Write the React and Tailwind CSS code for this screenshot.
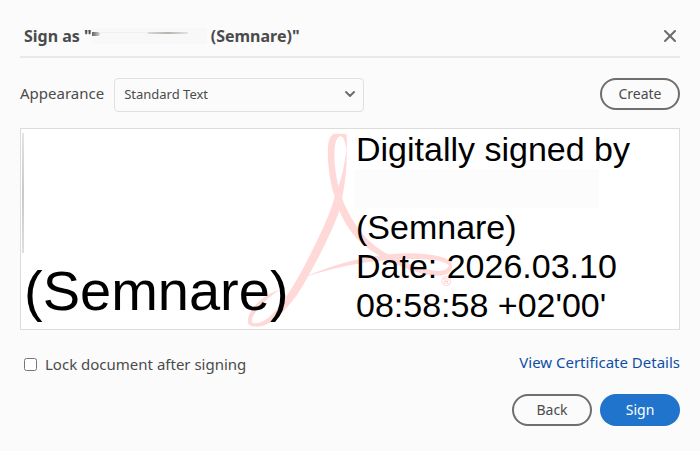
import { ChevronDown, X } from "lucide-react";

function PdfMark() {
  return (
    <svg
      viewBox="55 40 615 582"
      className="absolute inset-y-1 left-1/2 h-[194px] w-[205px] -translate-x-1/2"
      fill="#ffd8d8"
      aria-hidden="true"
    >
      <path d="M353 84V46L347 42H318C302 44 296 66 296 96C296 140 303 190 317 232C343 325 390 376 462 414C530 450 585 468 630 468C655 468 668 455 670 437H660C656 448 645 455 626 454C590 452 545 436 490 410C424 380 380 330 344 250C322 190 314 140 316 92C318 66 324 50 334 50C343 50 347 62 350 84Z" />
      <path d="M353 80C346 140 336 185 317 232C296 300 266 360 238 415C200 490 160 555 120 592C105 605 88 612 75 611C62 608 68 590 85 570C98 553 120 530 152 510C115 520 85 545 68 570C56 590 53 605 58 614C64 621 80 622 95 620C130 612 167 575 204 525C244 462 304 350 330 275C346 210 354 150 353 80Z" />
      <path d="M222 475C300 438 420 401 540 401C602 401 667 411 670 438H660C650 424 610 418 550 418C430 418 310 442 222 475Z" />
      <text
        x="652"
        y="500"
        textAnchor="middle"
        fontSize="40"
        fill="#ffc8c8"
        className="font-['Liberation_Sans',sans-serif]"
      >
        ®
      </text>
    </svg>
  );
}

export default function App() {
  return (
    <main className="min-h-screen bg-[#fbfbfb] px-5 pt-4 pb-6 font-['Noto_Sans',sans-serif] text-[#4b4b4b]">
      <header className="flex h-[42px] items-center justify-between border-b-2 border-[#e9e9e9] pl-1">
        <h1 className="flex items-center text-base font-bold">
          Sign as "
          {/* Name is blanked out */}
          <span className="mr-1 flex h-4 w-[115px] items-start bg-[#f8f8f8] pt-1">
            <span className="h-1 w-2 rounded-r-full bg-gradient-to-r from-[#6b635c] to-[#d8d5d0]"></span>
            <span className="h-px w-12 bg-[#f0f0ee]"></span>
            <span className="h-0.5 w-10 bg-gradient-to-r from-[#d8d8d5] via-[#b5b5b0] to-[#e4e4e2]"></span>
          </span>
          (Semnare)"
        </h1>
        <button aria-label="Close" className="text-[#6e6e6e]">
          <X size={20} strokeWidth={2.5} />
        </button>
      </header>

      <div className="mt-5 flex items-start justify-between">
        <div className="flex items-start">
          <label htmlFor="appearance" className="mr-2.5 text-[15px] leading-[30px]">
            Appearance
          </label>
          <div className="relative">
            <select
              id="appearance"
              className="h-[34px] w-[250px] appearance-none rounded border border-[#e0e0e0] bg-[#fbfbfb] px-[9px] text-[13px]"
            >
              <option>Standard Text</option>
            </select>
            <ChevronDown
              size={16}
              strokeWidth={3}
              className="pointer-events-none absolute top-2 right-1.5 text-[#6e6e6e]"
            />
          </div>
        </div>
        <button className="h-8 w-20 rounded-full border-2 border-[#6e6e6e] text-sm">
          Create
        </button>
      </div>

      {/* Signature preview */}
      <section className="relative mt-4 grid grid-cols-2 border border-[#dcdcdc] bg-white font-['Liberation_Sans',sans-serif] text-black">
        <PdfMark />
        <div className="relative flex flex-col justify-between pt-1 pb-1.5 pl-px">
          <div className="h-[120px] w-0.5 bg-gradient-to-b from-[#e4e4e4] via-[#c8c8c8] to-[#dedede]"></div>
          <p className="pl-0.5 text-[56px] leading-[64px]">(Semnare)</p>
        </div>
        <div className="relative pt-px pb-1 pl-1 text-[34px] leading-[39px]">
          <p className="pl-0.5">Digitally signed by</p>
          <div className="h-[39px] w-[245px] bg-[#fcfcfc]"></div>
          <p className="pl-0.5">(Semnare)</p>
          <p className="pl-0.5">Date: 2026.03.10</p>
          <p className="pl-0.5">08:58:58 +02'00'</p>
        </div>
      </section>

      <div className="mt-5 flex items-start justify-between text-[15px] leading-6">
        <label className="mt-0.5 flex items-center gap-2 pl-1">
          <input type="checkbox" className="h-[13px] w-[13px]" />
          Lock document after signing
        </label>
        <a href="#certificate" className="text-[#0d4fa6]">
          View Certificate Details
        </a>
      </div>

      <div className="mt-[18px] flex justify-end gap-2">
        <button className="h-8 w-20 rounded-full border-2 border-[#6e6e6e] text-sm">
          Back
        </button>
        <button className="h-8 w-20 rounded-full bg-[#2074cb] text-sm text-white">
          Sign
        </button>
      </div>
    </main>
  );
}
